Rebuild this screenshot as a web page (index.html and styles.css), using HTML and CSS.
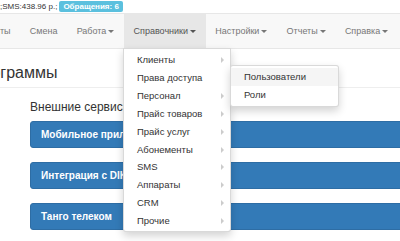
FILE: index.html
```html
<!DOCTYPE html>
<html lang="ru">
<head>
<meta charset="utf-8">
<link rel="stylesheet" href="styles.css">
</head>
<body>
<div class="page">
  <div class="topbar"><span class="sms">;SMS:438.96 р.;</span><span class="badge">Обращения: 6</span></div>
  <nav class="navbar">
    <ul class="nav">
      <li class="nav-item nav-cut">ты</li>
      <li class="nav-item">Смена</li>
      <li class="nav-item">Работа<span class="caret"></span></li>
      <li class="nav-item active">Справочники<span class="caret"></span>
        <ul class="dropdown">
          <li class="dd-item sub">Клиенты</li>
          <li class="dd-item open">Права доступа
            <ul class="submenu">
              <li class="dd-item hover">Пользователи</li>
              <li class="dd-item">Роли</li>
            </ul>
          </li>
          <li class="dd-item sub">Персонал</li>
          <li class="dd-item sub">Прайс товаров</li>
          <li class="dd-item sub">Прайс услуг</li>
          <li class="dd-item sub">Абонементы</li>
          <li class="dd-item sub">SMS</li>
          <li class="dd-item sub">Аппараты</li>
          <li class="dd-item sub">CRM</li>
          <li class="dd-item sub">Прочие</li>
        </ul>
      </li>
      <li class="nav-item">Настройки<span class="caret"></span></li>
      <li class="nav-item">Отчеты<span class="caret"></span></li>
      <li class="nav-item">Справка<span class="caret"></span></li>
    </ul>
  </nav>
  <main class="content">
    <h1 class="title">Программы</h1>
    <hr class="rule">
    <section class="services">
      <h4 class="services-title">Внешние сервисы</h4>
      <a class="btn">Мобильное приложение</a>
      <a class="btn">Интеграция с DIKIDI</a>
      <a class="btn">Танго телеком</a>
    </section>
  </main>
</div>
</body>
</html>
```
FILE: styles.css
```css
* { box-sizing: border-box; }
html, body { margin: 0; padding: 0; background: #fff; }
body { font-family: "Liberation Sans", Arial, sans-serif; color: #333; }
.page { width: 400px; height: 241px; overflow: hidden; position: relative; }

.topbar { height: 13px; font-size: 8px; line-height: 13px; white-space: nowrap; display: flex; align-items: center; }
.sms { color: #333; }
.badge { margin-left: 2px; background: #5bc0de; color: #fff; font-weight: bold; line-height: 11px; height: 11px; padding: 0 4px; border-radius: 2px; }

.navbar { background: #f8f8f8; border-top: 1px solid #e7e7e7; border-bottom: 1px solid #e7e7e7; height: 36px; }
.nav { list-style: none; margin: 0; padding: 0; display: flex; white-space: nowrap; }
.nav-item { position: relative; height: 34px; line-height: 34px; padding: 0 9.6px; font-size: 9px; color: #777; }
.nav-cut { padding-left: 0; }
.nav-item.active { background: #e7e7e7; color: #555; }
.caret { display: inline-block; width: 0; height: 0; margin-left: 2px; vertical-align: middle; border-top: 3px solid #777; border-left: 3px solid transparent; border-right: 3px solid transparent; }
.active .caret { border-top-color: #555; }

.dropdown, .submenu { list-style: none; margin: 0; position: absolute; background: #fff; border: 1px solid rgba(0,0,0,.15); box-shadow: 0 4px 8px rgba(0,0,0,.175); z-index: 10; }
.dropdown { top: 34px; left: -1px; width: 108px; padding: 2px 0 1px; border-radius: 0 0 3px 3px; }
.submenu { top: -4px; left: 106px; width: 109px; padding: 2px 0; border-radius: 3px; }
.dd-item { position: relative; font-size: 9.5px; line-height: 11.9px; padding: 3px 13px; color: #333; }
.dd-item.hover { background: #f5f5f5; }
.dd-item.sub::after { content: ""; position: absolute; right: 6px; top: 6px; width: 0; height: 0; border-left: 3px solid #ccc; border-top: 3px solid transparent; border-bottom: 3px solid transparent; }

.content { padding: 0; }
.title { margin: 15px 0 0 -29px; font-size: 16px; line-height: 18px; font-weight: normal; color: #333; white-space: nowrap; }
.rule { margin: 5px 0 0; border: 0; border-top: 1px solid #eee; height: 0; }
.services { padding-left: 30px; }
.services-title { margin: 12px 0 7px; font-size: 12px; line-height: 14px; font-weight: normal; white-space: nowrap; }
.btn { display: block; width: 500px; height: 27px; line-height: 25px; padding: 0 10px; margin-bottom: 14px; background: #337ab7; border: 1px solid #2e6da4; border-radius: 3px; color: #fff; font-weight: bold; font-size: 10px; white-space: nowrap; }
```
